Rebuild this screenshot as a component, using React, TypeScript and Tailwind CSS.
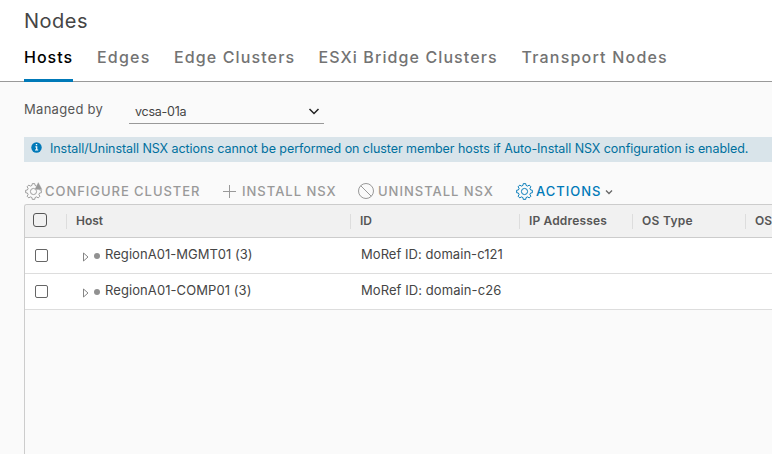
import React from "react";

const gearPath = (() => {
  const parts: string[] = [];
  const point = (r: number, deg: number) => {
    const a = (deg * Math.PI) / 180;
    return `${(8 + r * Math.cos(a)).toFixed(2)} ${(8 + r * Math.sin(a)).toFixed(2)}`;
  };
  for (let i = 0; i < 8; i++) {
    const a = i * 45;
    parts.push(`${i ? "L" : "M"}${point(5.9, a - 14)}L${point(7.5, a - 9)}L${point(7.5, a + 9)}L${point(5.9, a + 14)}`);
  }
  return parts.join("") + "Z";
})();

function Gear({ warning = false }: { warning?: boolean }) {
  return (
    <svg width="17" height="17" viewBox="0 0 16 16" fill="none" stroke="currentColor" strokeWidth=".9" strokeLinejoin="round" className="shrink-0 overflow-visible">
      <path d={gearPath} />
      <circle cx="8" cy="8" r="2.9" />
      {warning && <path d="M12.5 -.9 16.4 6.4H8.8Z" fill="currentColor" stroke="#fafafa" strokeWidth=".3" />}
    </svg>
  );
}

function Box({ header = false }: { header?: boolean }) {
  return <span className={header ? "block size-3.5 rounded-[3px] border-[1.5px] border-[#565656]" : "block size-[13px] rounded-[2px] border border-[#666]"} />;
}

const tabs = [
  { label: "Hosts", cls: "w-[49px] tracking-[1.0px] text-black border-b-[3px] border-[#0079b8]" },
  { label: "Edges", cls: "w-[53px] tracking-[1.2px] text-[#737373]" },
  { label: "Edge Clusters", cls: "w-[120.5px] tracking-[1.12px] text-[#737373]" },
  { label: "ESXi Bridge Clusters", cls: "w-[179px] tracking-[1.1px] text-[#737373]" },
  { label: "Transport Nodes", cls: "w-[147px] tracking-[1.2px] text-[#737373]" },
];

const columns = [
  { label: "Host", cls: "w-[284px]" },
  { label: "ID", cls: "w-[169px]" },
  { label: "IP Addresses", cls: "w-[113px] tracking-[0.15px]" },
  { label: "OS Type", cls: "w-[113px] tracking-[0.3px]" },
  { label: "OS", cls: "w-[113px]" },
];

const rows = [
  { name: "RegionA01-MGMT01 (3)", id: "MoRef ID: domain-c121", cls: "tracking-[0.05px]" },
  { name: "RegionA01-COMP01 (3)", id: "MoRef ID: domain-c26", cls: "tracking-[0.08px]" },
];

export default function App() {
  return (
    <div className="flex h-[454px] w-[772px] flex-col overflow-hidden bg-[#fafafa] font-['Inter',sans-serif] text-[13px] text-[#454545]">
      <header className="h-[82px] shrink-0 border-b border-[#999] bg-white pl-6">
        <h1 className="h-[42px] pt-[7px] text-[20px] leading-7 tracking-[0.5px]">Nodes</h1>
        <nav className="flex h-[40px] gap-6">
          {tabs.map((t) => (
            <a key={t.label} className={`h-full shrink-0 whitespace-nowrap pt-[5px] text-[16px] font-medium leading-5 ${t.cls}`}>{t.label}</a>
          ))}
        </nav>
      </header>
      <div className="flex h-[55px] shrink-0 pl-6">
        <span className="w-[105px] whitespace-nowrap pt-[17px] leading-5 tracking-[0.3px] text-[#565656]">Managed by</span>
        <div className="mt-[17px] flex h-[25px] w-[195px] justify-between border-b border-[#999] pl-1.5 pr-1">
          <span className="pt-[3px] text-[12.5px] leading-5 tracking-[-0.25px]">vcsa-01a</span>
          <svg width="12" height="12" viewBox="0 0 12 12" className="mt-[7px]" fill="none" stroke="#222" strokeWidth="1.5"><path d="m1.5 3 4.5 4.5L10.5 3" /></svg>
        </div>
      </div>
      <div className="ml-6 flex h-[25px] shrink-0 bg-[#d9e4ea] pl-[7px] text-[#00709e]">
        <svg width="11" height="11" viewBox="0 0 11 11" className="mt-[5px] shrink-0">
          <circle cx="5.5" cy="5.5" r="5.2" fill="#0079b8" />
          <path d="M4.4 4.8h1.3v3M4 8h3.2M4.8 2.7h1.4" fill="none" stroke="white" strokeWidth="1.2" />
        </svg>
        <span className="ml-2 whitespace-nowrap pt-[2px] text-[12.5px] leading-5 tracking-[-0.06px]">Install/Uninstall NSX actions cannot be performed on cluster member hosts if Auto-Install NSX configuration is enabled.</span>
      </div>
      <div className="flex h-[42px] shrink-0 items-start pl-[25px] pt-[20px] font-medium leading-[18px] text-[#999]">
        <div className="flex w-[197px] items-center gap-[3px] whitespace-nowrap tracking-[0.95px]"><Gear warning />CONFIGURE CLUSTER</div>
        <div className="flex w-[135px] items-center gap-[5px] whitespace-nowrap tracking-[1px]">
          <svg width="15" height="15" viewBox="0 0 15 15" fill="none" stroke="currentColor"><path d="M1 7.5h13M7.5 1v13" /></svg>INSTALL NSX
        </div>
        <div className="flex w-[158px] items-center gap-[3px] whitespace-nowrap tracking-[0.98px]">
          <svg width="18" height="18" viewBox="0 0 18 18" fill="none" stroke="currentColor"><circle cx="9" cy="9" r="7.5" /><path d="m3.7 3.7 10.6 10.6" /></svg>UNINSTALL NSX
        </div>
        <div className="flex items-center gap-[3px] whitespace-nowrap pl-px tracking-[1px] text-[#0079b8]">
          <Gear />ACTIONS
          <svg width="8" height="8" viewBox="0 0 8 8" fill="none" stroke="#666" strokeWidth="1.3" className="mt-0.5"><path d="m1 2.5 3 3 3-3" /></svg>
        </div>
      </div>
      <main className="ml-6 grow overflow-hidden rounded-tl-[3px] border-l border-t border-[#ccc]">
        <div className="flex h-[33px] w-[836px] items-center border-b border-[#ccc] bg-[#f1f1f1] font-semibold text-[#565656]">
          <div className="w-[41px] pb-[2px] pl-[8px]"><Box header /></div>
          {columns.map((c) => (
            <div key={c.label} className={`flex h-[15px] shrink-0 items-center whitespace-nowrap border-l border-[#ddd] pl-[9px] text-[12px] leading-5 ${c.cls}`}>{c.label}</div>
          ))}
        </div>
        {rows.map((r) => (
          <div key={r.name} className={`flex h-9 items-center border-b border-[#ddd] bg-white ${r.cls}`}>
            <div className="w-[57px] pl-[10px]"><Box /></div>
            <div className="flex w-[279px] items-center pb-px">
              <svg width="8" height="10" viewBox="0 0 8 10" className="mt-[3px]" fill="none" stroke="#777" strokeWidth=".9"><path d="M1.5 1 6 5l-4.5 4Z" /></svg>
              <span className="ml-1 mt-[2px] size-[6px] rounded-full bg-[#919191]" />
              <span className="ml-[5px] whitespace-nowrap">{r.name}</span>
            </div>
            <span className="pb-px">{r.id}</span>
          </div>
        ))}
      </main>
    </div>
  );
}
